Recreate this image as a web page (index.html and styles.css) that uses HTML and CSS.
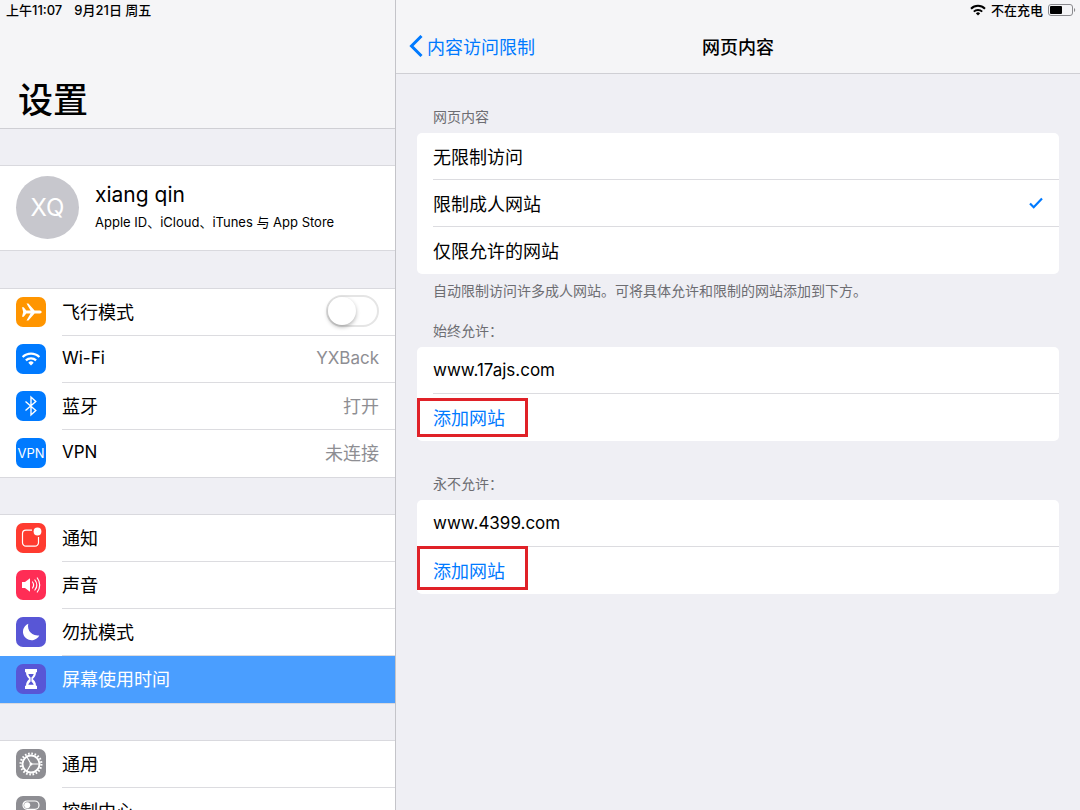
FILE: index.html
```html
<!DOCTYPE html>
<html lang="zh-CN">
<head>
  <meta charset="UTF-8" />
  <meta name="viewport" content="width=device-width, initial-scale=1.0" />
  <title>设置</title>
  <link rel="stylesheet" href="styles.css">
</head>
<body>
  <div class="app">
    <aside class="sidebar">
      <header class="sidebar-header">
        <div class="status-bar">
          <span>上午11:07</span>
          <span>9月21日 周五</span>
        </div>
        <h1>设置</h1>
      </header>

      <a class="group profile" href="#">
        <span class="avatar">XQ</span>
        <span class="profile-text">
          <span class="profile-name">xiang qin</span>
          <span class="profile-sub">Apple ID、iCloud、iTunes 与 App Store</span>
        </span>
      </a>

      <div class="group">
        <label class="item">
          <svg class="icon orange" viewBox="0 0 30 30"><path fill="#fff" d="M6 10.2h1.700l2.600 3.300h4.300L10.500 6.500h1.900l6.200 7h4.700c1.200 0 2.500.6 2.500 1.500s-1.300 1.500-2.500 1.500h-4.700l-6.200 7h-1.900l4.100-7h-4.300l-2.600 3.300H6L7.200 15z"/></svg>
          <span class="row"><span>飞行模式</span><input class="switch" type="checkbox"></span>
        </label>
        <a class="item" href="#">
          <svg class="icon blue" viewBox="0 0 30 30"><g fill="none" stroke="#fff" stroke-width="2.200"><path d="M6.600 13a12 12 0 0 1 16.800 0"/><path d="M9.900 16.400a7.200 7.200 0 0 1 10.200 0"/></g><path fill="#fff" d="M12.300 18.700a3.800 3.800 0 0 1 5.400 0L15 21.500z"/></svg>
          <span class="row latin"><span>Wi-Fi</span><span class="value">YXBack</span></span>
        </a>
        <a class="item" href="#">
          <svg class="icon blue" viewBox="0 0 30 30"><path fill="none" stroke="#fff" stroke-width="1.400" d="M9.500 10.500l10.300 9L15 24V6l4.800 4.500-10.300 9"/></svg>
          <span class="row"><span>蓝牙</span><span class="value">打开</span></span>
        </a>
        <a class="item" href="#">
          <span class="icon blue icon-text">VPN</span>
          <span class="row"><span class="latin">VPN</span><span class="value">未连接</span></span>
        </a>
      </div>

      <div class="group">
        <a class="item" href="#">
          <svg class="icon red" viewBox="0 0 30 30"><path fill="none" stroke="#fff" stroke-width="1.200" d="M16 7.200H10A3.500 3.500 0 0 0 6.500 10.700v9A3.500 3.500 0 0 0 10 23.200h9a3.500 3.500 0 0 0 3.500-3.500V14"/><circle cx="21.500" cy="8.500" r="3.900" fill="#fff"/></svg>
          <span class="row">通知</span>
        </a>
        <a class="item" href="#">
          <svg class="icon pink" viewBox="0 0 30 30"><path fill="#fff" d="M6 12h3l5-3.700v13.400L9 18H6z"/><g fill="none" stroke="#fff" stroke-width="1.200" stroke-linecap="round"><path d="M16.500 12a5 5 0 0 1 0 6"/><path d="M18.900 10a8.200 8.200 0 0 1 0 10"/><path d="M21.300 8a11.400 11.400 0 0 1 0 14"/></g></svg>
          <span class="row">声音</span>
        </a>
        <a class="item" href="#">
          <svg class="icon purple" viewBox="0 0 30 30"><path fill="#fff" d="M12.300 6.700a9.500 9.500 0 0 0 11 11.700A8.600 8.600 0 1 1 12.300 6.700z"/></svg>
          <span class="row">勿扰模式</span>
        </a>
        <a class="item selected" href="#">
          <svg class="icon purple" viewBox="0 0 30 30"><path fill="#fff" d="M9 5h12v3.200h-1c0 3.500-1.500 5-3.300 6.800 1.800 1.800 3.300 3.300 3.300 6.800h1V25H9v-3.200h1c0-3.500 1.500-5 3.300-6.800C11.500 13.200 10 11.700 10 8.200H9z"/><path fill="#5856d6" d="M12.300 10h5.400c-.4 1.500-1.200 2.500-2.300 3.600v3.800c1 1 1.800 1.800 2.300 3.400h-5.400c.5-1.600 1.300-2.400 2.300-3.400v-3.800C13.500 12.500 12.700 11.500 12.300 10z"/></svg>
          <span class="row">屏幕使用时间</span>
        </a>
      </div>

      <div class="group">
        <a class="item" href="#">
          <svg class="icon gray" viewBox="0 0 30 30"><g fill="none" stroke="#fff"><circle cx="15" cy="15" r="10.400" stroke-width="2.200" stroke-dasharray="1.630 1.637"/><circle cx="15" cy="15" r="8.500" stroke-width="1.900"/><path stroke-width="1.200" d="M15 15h8M15 15l-4-7M15 15l-4 7"/></g><circle cx="15" cy="15" r="1.500" fill="#fff"/></svg>
          <span class="row">通用</span>
        </a>
        <a class="item" href="#">
          <svg class="icon gray" viewBox="0 0 30 30"><rect x="7" y="5" width="16" height="8.400" rx="4.200" fill="none" stroke="#fff" stroke-width="1.200"/><circle cx="11.200" cy="9.200" r="3" fill="#fff"/><rect x="6.500" y="16" width="17" height="9" rx="4.500" fill="#fff"/><circle cx="19" cy="20.500" r="3" fill="#8e8e93"/></svg>
          <span class="row">控制中心</span>
        </a>
      </div>
    </aside>

    <main class="detail">
      <header class="detail-header">
        <div class="status-bar status-right">
          <svg class="status-wifi" viewBox="0 0 16 12"><g fill="none" stroke="#000" stroke-width="2"><path d="M1 4.700a10 10 0 0 1 14 0"/><path d="M3.800 7.600a6 6 0 0 1 8.400 0"/></g><path d="M5.900 9.400a3 3 0 0 1 4.200 0L8 11.600z"/></svg>
          <span>不在充电</span>
          <svg class="battery" viewBox="0 0 28 12"><rect x=".5" y=".5" width="24" height="11" rx="2.500" fill="none" stroke="#8a8a8e"/><rect x="2" y="2" width="12" height="8" rx="1"/><path fill="#8a8a8e" d="M26 4c1.600.5 1.600 3.500 0 4z"/></svg>
        </div>
        <nav class="nav-bar">
          <a class="back" href="#">
            <svg viewBox="0 0 14 22"><path fill="none" stroke="#007aff" stroke-width="3" d="M12.500 1L2.500 11l10 10"/></svg>
            内容访问限制
          </a>
          <h2>网页内容</h2>
        </nav>
      </header>

      <section class="section">
        <h3>网页内容</h3>
        <div class="card">
          <label class="cell"><span>无限制访问</span><input class="choice" type="radio" name="limit"></label>
          <label class="cell"><span>限制成人网站</span><input class="choice" type="radio" name="limit" checked><svg class="check" viewBox="0 0 14 12"><path fill="none" stroke="#007aff" stroke-width="2.200" d="M1 6.500l3.700 3.700L13 1.500"/></svg></label>
          <label class="cell"><span>仅限允许的网站</span><input class="choice" type="radio" name="limit"></label>
        </div>
        <p class="hint">自动限制访问许多成人网站。可将具体允许和限制的网站添加到下方。</p>
      </section>

      <section class="section after-hint">
        <h3>始终允许：</h3>
        <div class="card">
          <div class="cell latin">www.17ajs.com</div>
          <div class="cell"><button class="add" type="button">添加网站</button></div>
          <span class="marker"></span>
        </div>
      </section>

      <section class="section">
        <h3>永不允许：</h3>
        <div class="card">
          <div class="cell latin">www.4399.com</div>
          <div class="cell"><button class="add" type="button">添加网站</button></div>
          <span class="marker marker-tall"></span>
        </div>
      </section>
    </main>
  </div>
</body>
</html>
```
FILE: styles.css
```css
* {
  box-sizing: border-box;
}
body {
  margin: 0;
  font-family: Inter, "Noto Sans CJK SC", sans-serif;
  font-size: 18px;
  color: #000;
  background: #efeff4;
}
h1, h2, h3, p {
  margin: 0;
}
a {
  color: inherit;
  text-decoration: none;
}
.app {
  display: flex;
  height: 100vh;
  overflow: hidden;
}
.latin {
  font-size: 17px;
}

/* left column */
.sidebar {
  flex: none;
  width: 396px;
  border-right: 1px solid #c4c4c9;
  overflow: hidden;
}
.sidebar-header {
  background: #f5f5f7;
  border-bottom: 1px solid #cfcfd4;
}
.status-bar {
  display: flex;
  align-items: center;
  gap: 12px;
  height: 19px;
  padding: 0 6px;
  font-size: 13px;
  line-height: 18px;
  font-weight: 500;
}
.sidebar-header h1 {
  padding: 55px 18px 2px;
  font-size: 35px;
  line-height: 52px;
  font-weight: 500;
}
.group {
  margin-top: 36px;
  background: #fff;
  border-top: 1px solid #d9d9de;
  border-bottom: 1px solid #d9d9de;
}
.profile {
  display: flex;
  align-items: center;
  gap: 16px;
  height: 86px;
  padding: 0 16px 2px;
}
.profile + .group {
  margin-top: 37px;
}
.avatar {
  display: flex;
  align-items: center;
  justify-content: center;
  width: 63px;
  height: 63px;
  border-radius: 50%;
  background: #c7c7cd;
  color: #fff;
  font-size: 24px;
}
.profile-text {
  display: flex;
  flex-direction: column;
}
.profile-name {
  font-size: 21px;
  line-height: 30px;
}
.profile-sub {
  font-size: 13px;
  line-height: 24px;
}
.item {
  display: flex;
  align-items: center;
  gap: 16px;
  height: 47px;
  padding-left: 16px;
}
.icon {
  flex: none;
  width: 30px;
  height: 30px;
  margin-bottom: 2px;
  border-radius: 7px;
}
.icon-text {
  display: flex;
  align-items: center;
  justify-content: center;
  color: #fff;
  font-size: 13px;
}
.orange { background: #ff9500; }
.blue { background: #007aff; }
.red { background: #ff3b30; }
.pink { background: #ff2d55; }
.purple { background: #5856d6; }
.gray { background: #8e8e93; }
.row {
  flex: 1;
  display: flex;
  align-items: center;
  justify-content: space-between;
  align-self: stretch;
  padding-right: 16px;
  padding-bottom: 2px;
  border-bottom: 1px solid #dcdce0;
}
.item:last-child .row {
  border-bottom-color: transparent;
}
.value {
  color: #8e8e93;
}
.selected {
  background: #4a9eff;
  color: #fff;
}
.switch {
  appearance: none;
  width: 53px;
  height: 32px;
  margin: 0;
  border: 2px solid #e5e5e5;
  border-radius: 16px;
}
.switch::before {
  content: "";
  display: block;
  width: 28px;
  height: 28px;
  border-radius: 50%;
  background: #fff;
  box-shadow: 0 2px 4px rgba(0, 0, 0, 0.3);
}

/* right column */
.detail {
  flex: 1;
  min-width: 0;
}
.detail-header {
  background: #f5f5f7;
  border-bottom: 1px solid #cfcfd4;
}
.status-right {
  justify-content: flex-end;
  gap: 5px;
  padding-right: 4px;
}
.status-wifi {
  width: 16px;
  height: 12px;
}
.battery {
  width: 28px;
  height: 12px;
}
.nav-bar {
  display: grid;
  grid-template-columns: 1fr auto 1fr;
  align-items: center;
  height: 54px;
  padding: 0 13px;
}
.nav-bar h2 {
  font-size: 18px;
  font-weight: 500;
}
.back {
  display: flex;
  align-items: center;
  gap: 4px;
  color: #007aff;
}
.back svg {
  width: 14px;
  height: 22px;
}
.section {
  padding: 33px 21px 0;
}
.after-hint {
  padding-top: 20px;
}
.section h3,
.hint {
  padding: 0 16px;
  font-size: 14px;
  font-weight: 400;
  line-height: 20px;
  color: #6d6d72;
}
.section h3 {
  margin-bottom: 6px;
}
.hint {
  margin-top: 7px;
}
.card {
  position: relative;
  background: #fff;
  border-radius: 5px;
}
.cell {
  display: flex;
  align-items: center;
  justify-content: space-between;
  height: 47px;
  margin-left: 16px;
  padding-right: 16px;
  padding-bottom: 1px;
  border-bottom: 1px solid #dcdce0;
}
.cell:nth-last-child(1 of .cell) {
  border-bottom-color: transparent;
}
.choice {
  appearance: none;
  width: 0;
  height: 0;
  margin: 0 0 0 auto;
}
.check {
  width: 14px;
  height: 12px;
}
.add {
  padding: 0;
  border: none;
  background: none;
  font: inherit;
  color: #007aff;
  cursor: pointer;
}
/* red frame round the add button */
.marker {
  position: absolute;
  left: 0;
  bottom: 4px;
  width: 111px;
  height: 39px;
  border: 3px solid #e02128;
  pointer-events: none;
}
.marker-tall {
  height: 44px;
}
```
